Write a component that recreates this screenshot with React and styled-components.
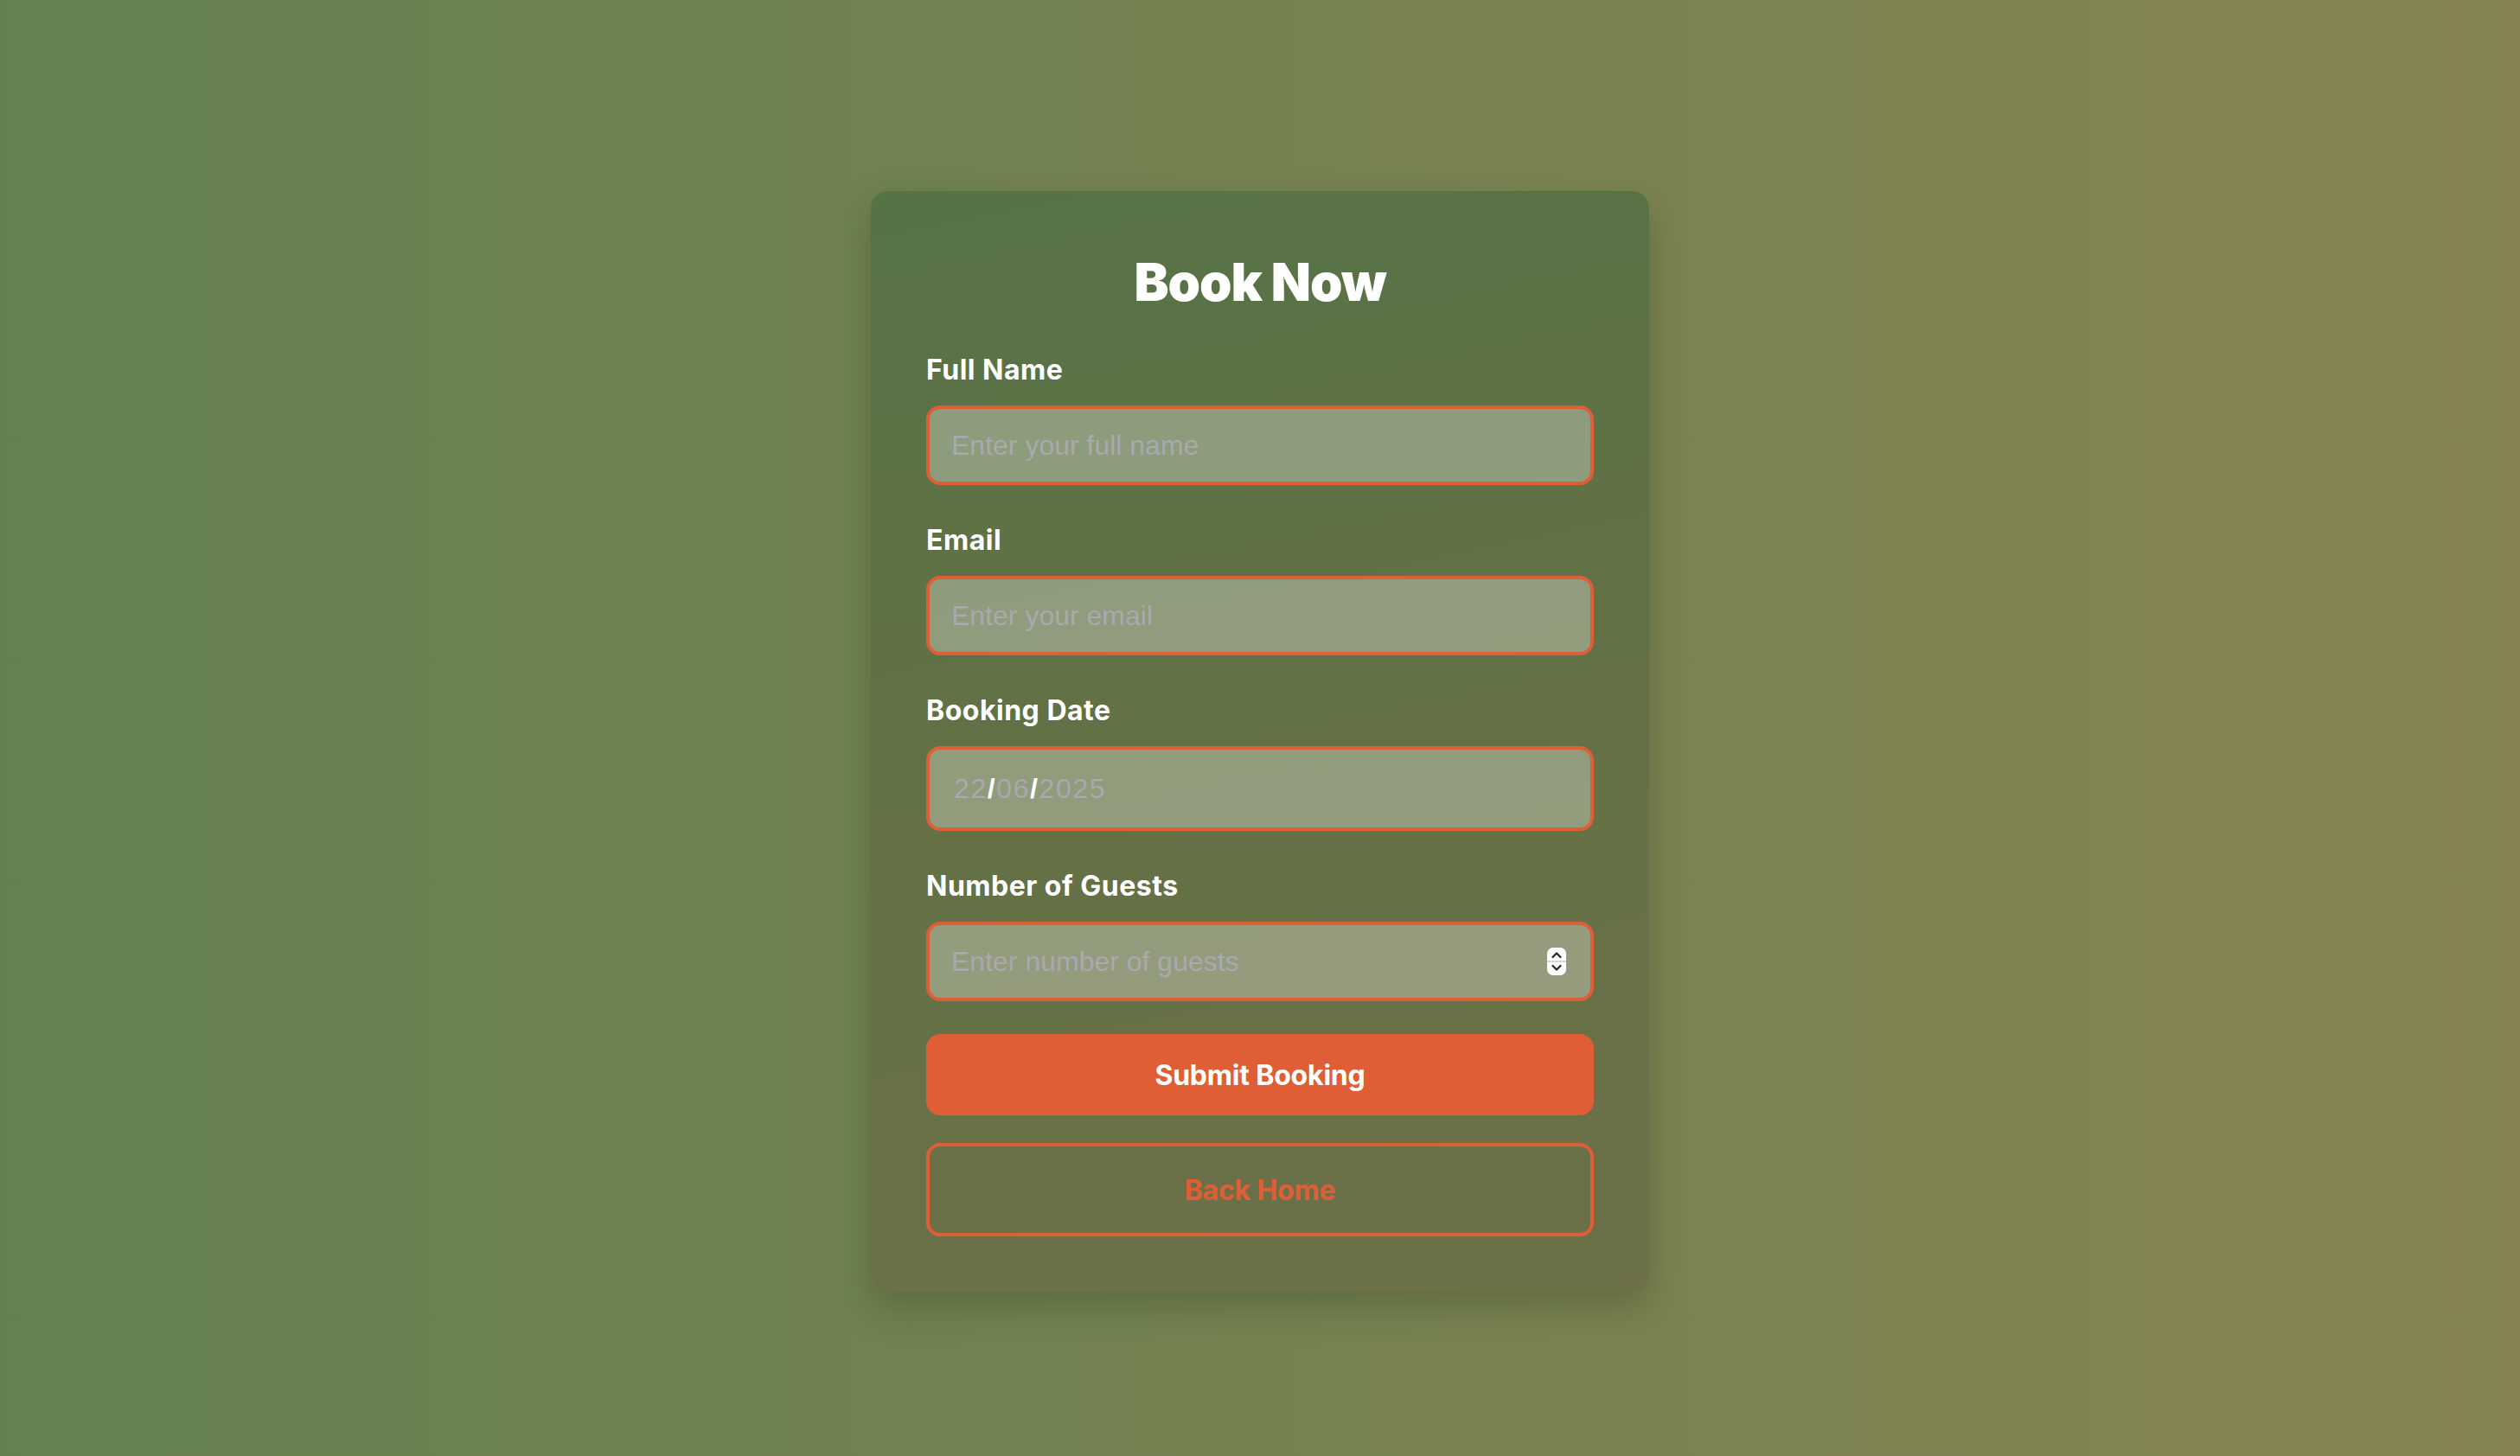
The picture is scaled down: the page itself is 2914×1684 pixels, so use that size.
import React from "react";
import styled, { createGlobalStyle } from "styled-components";

const ORANGE = "#e05e36";

const GlobalStyle = createGlobalStyle`
  html, body { margin: 0; padding: 0; }
  body { font-family: "Inter", "Noto Sans", sans-serif; }
  * { box-sizing: border-box; }
`;

const Page = styled.main`
  min-height: 100vh;
  background: linear-gradient(90deg, #648150 0%, #878451 100%);
  display: flex;
  justify-content: center;
  align-items: flex-start;
  padding: 221px 0 120px;
`;

const Card = styled.section`
  width: 900px;
  padding: 64px;
  border-radius: 20px;
  background: linear-gradient(168deg, #567345 0%, #637145 50%, #6d7048 100%);
  box-shadow: 0 18px 40px rgba(40, 50, 25, 0.28);
`;

const Title = styled.h1`
  margin: 0 0 37px;
  font-family: "Inter", sans-serif;
  font-weight: 900;
  font-size: 60px;
  line-height: 82px;
  letter-spacing: -1px;
  color: #ffffff;
  text-align: center;
`;

const Form = styled.form`
  display: flex;
  flex-direction: column;
`;

const Field = styled.div`
  display: flex;
  flex-direction: column;
  & + & { margin-top: 40px; }
`;

const Label = styled.label`
  font-family: "Inter", sans-serif;
  font-weight: 650;
  font-size: 32px;
  line-height: 48px;
  letter-spacing: 0.5px;
  color: #ffffff;
  margin-bottom: 17px;
`;

const InputWrap = styled.div`
  position: relative;
`;

const TextInput = styled.input`
  width: 100%;
  height: ${(p) => p.$h || 92}px;
  border: 4px solid ${ORANGE};
  border-radius: 16px;
  background: rgba(255, 255, 255, 0.3);
  padding: 0 25px;
  font-family: "Liberation Sans", Arial, sans-serif;
  font-size: 32px;
  color: #ffffff;
  outline: none;
  -moz-appearance: textfield;
  &::placeholder { color: #a9a9ae; }
  &::-webkit-inner-spin-button,
  &::-webkit-outer-spin-button { -webkit-appearance: none; margin: 0; }
`;

const DateBox = styled.div`
  height: 98px;
  border: 4px solid ${ORANGE};
  border-radius: 16px;
  background: rgba(255, 255, 255, 0.3);
  padding: 0 28px;
  display: flex;
  align-items: center;
  font-family: "Liberation Sans", Arial, sans-serif;
  font-size: 32px;
  letter-spacing: 1.6px;
`;

const DatePart = styled.span`
  color: ${(p) => (p.$sep ? "#ffffff" : "#a9a9ae")};
  font-weight: ${(p) => (p.$sep ? 700 : 400)};
`;

const Stepper = styled.span`
  position: absolute;
  right: 32px;
  top: 50%;
  transform: translateY(-50%);
  width: 22px;
  height: 32px;
  display: flex;
  pointer-events: none;
`;

const PrimaryButton = styled.button`
  margin-top: 38px;
  height: 94px;
  border: none;
  border-radius: 16px;
  background: ${ORANGE};
  color: #ffffff;
  font-family: "Inter", sans-serif;
  font-weight: 650;
  font-size: 32px;
  letter-spacing: -0.2px;
  cursor: pointer;
`;

const OutlineButton = styled.button`
  margin-top: 32px;
  height: 108px;
  border: 4px solid ${ORANGE};
  border-radius: 16px;
  background: transparent;
  color: ${ORANGE};
  font-family: "Inter", sans-serif;
  font-weight: 650;
  font-size: 32px;
  letter-spacing: -0.2px;
  cursor: pointer;
`;

function StepperIcon() {
  return (
    <svg width="22" height="32" viewBox="0 0 22 32">
      <rect x="0" y="0" width="22" height="32" rx="7" fill="#ffffff" />
      <line x1="0" y1="16" x2="22" y2="16" stroke="#c8c8c8" strokeWidth="1.5" />
      <path d="M6.5 11 L11 6.5 L15.5 11" fill="none" stroke="#222" strokeWidth="2.2" strokeLinecap="round" strokeLinejoin="round" />
      <path d="M6.5 21 L11 25.5 L15.5 21" fill="none" stroke="#222" strokeWidth="2.2" strokeLinecap="round" strokeLinejoin="round" />
    </svg>
  );
}

export default function App() {
  return (
    <>
      <GlobalStyle />
      <Page>
        <Card>
          <Title>Book Now</Title>
          <Form onSubmit={(e) => e.preventDefault()}>
            <Field>
              <Label htmlFor="name">Full Name</Label>
              <TextInput id="name" type="text" placeholder="Enter your full name" />
            </Field>
            <Field>
              <Label htmlFor="email">Email</Label>
              <TextInput id="email" type="email" placeholder="Enter your email" />
            </Field>
            <Field>
              <Label>Booking Date</Label>
              <DateBox>
                <DatePart>22</DatePart>
                <DatePart $sep>/</DatePart>
                <DatePart>06</DatePart>
                <DatePart $sep>/</DatePart>
                <DatePart>2025</DatePart>
              </DateBox>
            </Field>
            <Field>
              <Label htmlFor="guests">Number of Guests</Label>
              <InputWrap>
                <TextInput id="guests" type="number" placeholder="Enter number of guests" />
                <Stepper>
                  <StepperIcon />
                </Stepper>
              </InputWrap>
            </Field>
            <PrimaryButton type="submit">Submit Booking</PrimaryButton>
            <OutlineButton type="button">Back Home</OutlineButton>
          </Form>
        </Card>
      </Page>
    </>
  );
}
